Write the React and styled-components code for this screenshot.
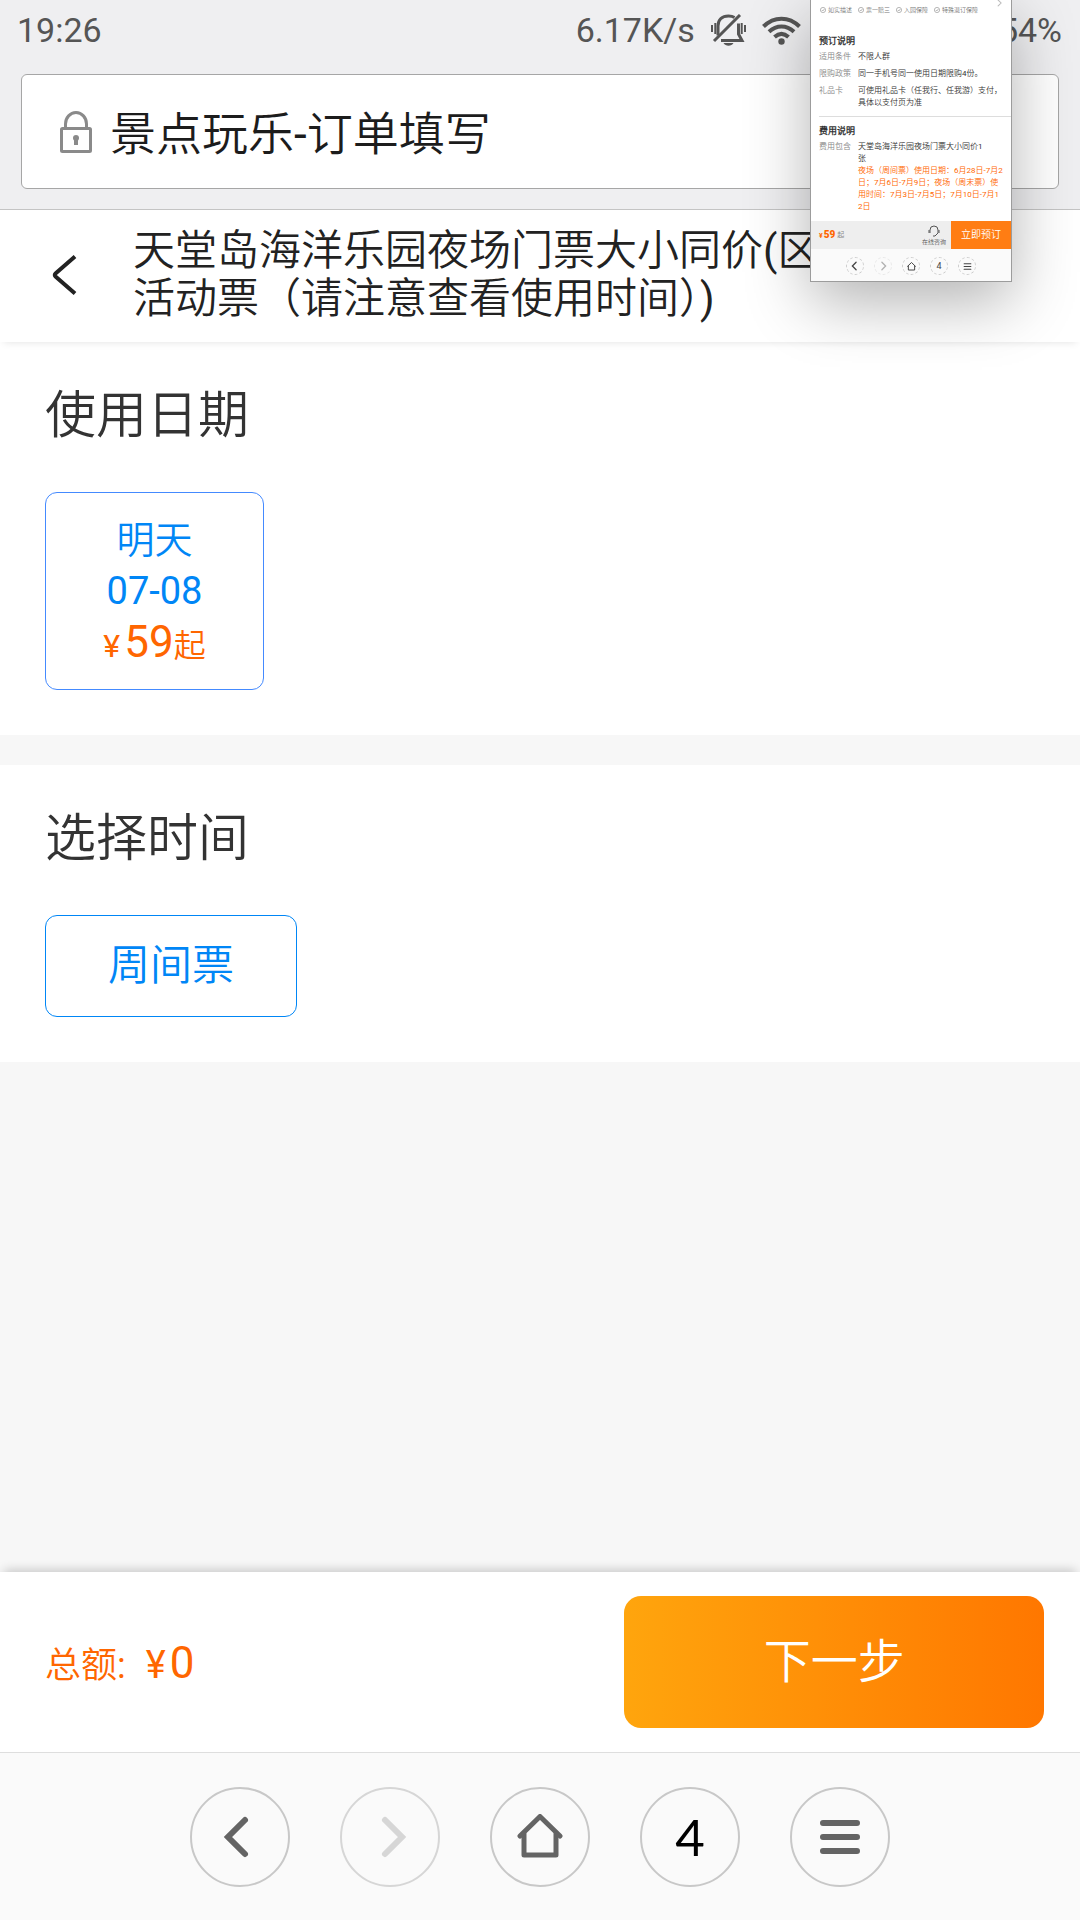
import React from 'react';
import styled, { createGlobalStyle } from 'styled-components';

const GlobalStyle = createGlobalStyle`
  * {
    box-sizing: border-box;
  }

  body {
    margin: 0;
    background: #f7f7f7;
    font-family: Roboto, 'Noto Sans CJK SC DemiLight', 'Noto Sans CJK SC Light', 'Noto Sans CJK SC', sans-serif;
    font-weight: 400;
    color: #333;
  }

  h1, h2, h3, p, dl, dd {
    margin: 0;
    font-weight: 400;
  }

  button {
    padding: 0;
    border: 0;
    background: none;
    color: inherit;
    font: inherit;
    cursor: pointer;
  }

  svg {
    display: block;
    flex: none;
  }
`;

const Page = styled.div`
  position: relative;
  display: flex;
  flex-direction: column;
  min-height: 100vh;
  overflow: hidden;
`;

/* browser chrome */

const BrowserTop = styled.header`
  display: flex;
  flex-direction: column;
  gap: 14px;
  padding-bottom: 20px;
  background: #efeff1;
  border-bottom: 1px solid #c4c4c4;
`;

const StatusBar = styled.div`
  display: flex;
  align-items: center;
  height: 60px;
  padding: 0 18px 0 17px;
  color: #555;
  font-size: 34px;
  line-height: 40px;
`;

const StatusRight = styled.div`
  display: flex;
  align-items: center;
  gap: 16px;
  margin-left: auto;
`;

const Battery = styled.span`
  margin-left: 182px;
`;

const AddressBar = styled.div`
  display: flex;
  align-items: center;
  gap: 18px;
  height: 115px;
  margin: 0 21px;
  padding: 0 38px;
  border: 1px solid #a6a6a6;
  border-radius: 6px;
  background: #fff;
`;

const AddressInput = styled.input`
  flex: 1;
  min-width: 0;
  padding: 0 0 4px;
  border: 0;
  outline: 0;
  background: none;
  color: #1c1c1c;
  font: inherit;
  font-size: 46px;
`;

/* order page */

const TitleBar = styled.div`
  display: flex;
  align-items: center;
  gap: 56px;
  padding: 17px 50px 19px;
  background: #fff;
  color: #222;
  box-shadow: 0 4px 8px -4px rgba(0, 0, 0, 0.12);
  z-index: 1;
`;

const Title = styled.h1`
  font-size: 42px;
  line-height: 48px;
`;

const Section = styled.section`
  margin-bottom: 30px;
  padding: 44px 45px 45px;
  background: #fff;
`;

const SectionTitle = styled.h2`
  margin-bottom: 46px;
  font-size: 51px;
  line-height: 60px;
`;

const DateCard = styled.button`
  display: flex;
  flex-direction: column;
  align-items: center;
  width: 219px;
  height: 198px;
  padding-top: 22px;
  border: 1px solid #448aff;
  border-radius: 12px;
  color: #0086f6;
  font-size: 38px;
  line-height: 51px;
`;

const Price = styled.span`
  color: #f60;
  font-size: 32px;
  line-height: 51px;

  b {
    margin-left: 4px;
    font-size: 44px;
    font-weight: 400;
  }
`;

const TimeCard = styled.button`
  height: 102px;
  padding: 0 62px 10px;
  border: 1px solid #0086f6;
  border-radius: 12px;
  color: #0086f6;
  font-size: 42px;
`;

const CheckoutBar = styled.div`
  display: flex;
  align-items: center;
  justify-content: space-between;
  margin-top: auto;
  padding: 24px 36px 24px 45px;
  background: #fff;
  box-shadow: 0 -6px 10px -4px rgba(0, 0, 0, 0.2);
`;

const Total = styled.p`
  display: flex;
  align-items: baseline;
  color: #f60;
  font-size: 36px;

  b {
    margin-left: 4px;
    font-size: 44px;
    font-weight: 400;
  }
`;

const Currency = styled.span`
  margin-left: 20px;
  font-size: 38px;
`;

const NextButton = styled.button`
  width: 42%;
  height: 132px;
  padding-bottom: 10px;
  border-radius: 17px;
  background: linear-gradient(90deg, #ffa50d, #ff7700);
  color: #fff;
  font-size: 47px;
`;

const BottomNav = styled.nav`
  display: flex;
  justify-content: center;
  gap: 50px;
  padding: 34px 0 33px;
  background: #fafafa;
  border-top: 1px solid #dedede;
`;

const NavButton = styled.button`
  display: flex;
  align-items: center;
  justify-content: center;
  width: 100px;
  height: 100px;
  border: 2px solid ${(props) => (props.disabled ? '#d6d6d6' : '#c8c8c8')};
  border-radius: 50%;
  color: ${(props) => (props.disabled ? '#d6d6d6' : '#646464')};
`;

const TabCount = styled.span`
  color: #000;
  font-family: Lato, sans-serif;
  font-size: 51px;
  line-height: 60px;
`;

/* screenshot preview that hangs over the top right corner */

const Preview = styled.aside`
  position: absolute;
  top: 0;
  right: 68px;
  z-index: 2;
  width: 202px;
  border: 1px solid #9c9c9c;
  border-top: 0;
  background: #fff;
  color: #333;
  font-size: 8px;
  line-height: 12px;
  box-shadow: 0 20px 60px rgba(0, 0, 0, 0.3);
`;

const Guarantees = styled.div`
  display: flex;
  gap: 6px;
  height: 27px;
  padding: 4px 0 0 9px;
  color: #777;
  font-size: 6px;
`;

const Guarantee = styled.span`
  display: flex;
  align-items: center;
  gap: 2px;
  height: 12px;
  white-space: nowrap;
`;

const More = styled.span`
  display: flex;
  align-items: flex-end;
  height: 3px;
  margin-left: auto;
  padding-right: 8px;
  color: #bbb;
`;

const PreviewSection = styled.section`
  margin-left: 8px;
  padding-top: 8px;
  border-bottom: ${(props) => (props.$last ? 0 : '1px solid #ddd')};
`;

const PreviewTitle = styled.h3`
  margin-bottom: 4px;
  font-size: 9px;
  font-weight: 700;
  line-height: 12px;
`;

const PreviewRow = styled.dl`
  display: grid;
  grid-template-columns: 39px 1fr;
  padding-bottom: ${(props) => props.$space}px;

  dt {
    color: #888;
  }

  dd {
    white-space: nowrap;
  }
`;

const Notice = styled.p`
  color: #f60;
`;

const PreviewBar = styled.div`
  display: flex;
  align-items: center;
  height: 28px;
  padding-left: 8px;
  background: #eee;
  color: #888;
  font-size: 7px;

  strong {
    color: #f60;
  }

  b {
    margin: 0 2px 0 1px;
    font-size: 10px;
  }
`;

const Service = styled.span`
  display: flex;
  flex-direction: column;
  align-items: center;
  gap: 1px;
  margin: 0 5px 0 auto;
  color: #555;
  font-size: 6px;
  line-height: 8px;
`;

const BookButton = styled.button`
  width: 60px;
  height: 28px;
  background: #ff7d13;
  color: #fff;
  font-size: 10px;
`;

const PreviewNav = styled.div`
  display: flex;
  justify-content: center;
  gap: 10px;
  padding: 8px 0 6px;
  background: #fafafa;
`;

const PreviewNavItem = styled.span`
  display: flex;
  align-items: center;
  justify-content: center;
  width: 18px;
  height: 18px;
  border: 1px dashed #ccc;
  border-radius: 50%;
  color: #444;
  font-size: 9px;
  opacity: ${(props) => (props.$faded ? 0.4 : 1)};
`;

const LockIcon = () => (
  <svg width="32" height="42" viewBox="0 0 32 42" fill="none" stroke="#8a8a8a" strokeWidth="3">
    <rect x="1.5" y="17.5" width="29" height="23" rx="1" />
    <path d="M5.500 17V13a10.500 11.500 0 0 1 21 0v4" />
    <circle cx="16" cy="27" r="3" fill="#8a8a8a" stroke="none" />
    <path d="M16 27v7" strokeWidth="4" />
  </svg>
);

const MuteIcon = () => (
  <svg width="35" height="32" viewBox="0 0 35 32" fill="none" stroke="#555" strokeWidth="3">
    <path d="M7 21.500V12C7 5.500 11 2 17.500 2c2.500 0 4.500.5 6 1.500" />
    <path d="M27.500 9.500V20l3.500 6.500H10" />
    <path d="M3 27L29 1" strokeWidth="3" />
    <path d="M12.500 29h10c-2 3.500-8 3.500-10 0z" fill="#555" stroke="none" />
    <path d="M1 11v7M4.300 9v11M30.700 9v11M34 11v7" strokeWidth="2" />
  </svg>
);

const WifiIcon = () => (
  <svg width="39" height="29" viewBox="0 0 39 29" fill="none" stroke="#555" strokeWidth="4">
    <path d="M1.500 10.500c10.500-10.500 25.500-10.500 36 0" />
    <path d="M7 15.800c7.500-7 17.500-7 25 0" />
    <path d="M12.500 21c4.500-4 9.500-4 14 0" />
    <circle cx="19.500" cy="25.500" r="3.200" fill="#555" stroke="none" />
  </svg>
);

const BackIcon = () => (
  <svg width="27" height="40" viewBox="0 0 27 40" fill="none" stroke="#222" strokeWidth="4">
    <path d="M25 1.500L5.500 18.500q-1.500 1.500 0 3L25 38.500" />
  </svg>
);

const Chevron = ({ size = 46, right }) => (
  <svg
    width={size}
    height={size}
    viewBox="0 0 46 46"
    fill="none"
    stroke="currentColor"
    strokeWidth="6"
    strokeLinecap="round"
  >
    <path d={right ? 'M18 6l17 17-17 17' : 'M28 6L11 23l17 17'} />
  </svg>
);

const HomeIcon = ({ size = 46 }) => (
  <svg
    width={size}
    height={size}
    viewBox="0 0 46 46"
    fill="none"
    stroke="currentColor"
    strokeWidth="5"
    strokeLinecap="round"
    strokeLinejoin="round"
  >
    <path d="M3 22L23 2.500 43 22" />
    <path d="M7 20v21h32V20" />
  </svg>
);

const MenuIcon = ({ size = 46 }) => (
  <svg
    width={size}
    height={size}
    viewBox="0 0 46 46"
    fill="none"
    stroke="currentColor"
    strokeWidth="6"
    strokeLinecap="round"
  >
    <path d="M6 9h34M6 23h34M6 37h34" />
  </svg>
);

const CheckIcon = () => (
  <svg width="6" height="6" viewBox="0 0 6 6" fill="none" stroke="#999" strokeWidth="0.700">
    <circle cx="3" cy="3" r="2.600" />
    <path d="M1.800 3l1 1 1.600-2" />
  </svg>
);

const HeadsetIcon = () => (
  <svg width="12" height="12" viewBox="0 0 12 12" fill="none" stroke="#555">
    <path d="M2 8V5a4 4 0 0 1 8 0v3l-3 3H5" />
    <path d="M1 5v3M11 5v3" />
  </svg>
);

const guarantees = ['如实描述', '票一赔三', '入园保障', '特殊退订保障'];

const PagePreview = () => (
  <Preview>
    <Guarantees>
      {guarantees.map((name) => (
        <Guarantee key={name}>
          <CheckIcon />
          {name}
        </Guarantee>
      ))}
      <More>
        <Chevron size={8} right />
      </More>
    </Guarantees>
    <PreviewSection>
      <PreviewTitle>预订说明</PreviewTitle>
      <PreviewRow $space={5}>
        <dt>适用条件</dt>
        <dd>不限人群</dd>
      </PreviewRow>
      <PreviewRow $space={5}>
        <dt>限购政策</dt>
        <dd>同一手机号同一使用日期限购4份。</dd>
      </PreviewRow>
      <PreviewRow $space={7}>
        <dt>礼品卡</dt>
        <dd>
          可使用礼品卡（任我行、任我游）支付，
          <br />
          具体以支付页为准
        </dd>
      </PreviewRow>
    </PreviewSection>
    <PreviewSection $last>
      <PreviewTitle>费用说明</PreviewTitle>
      <PreviewRow $space={8}>
        <dt>费用包含</dt>
        <dd>
          天堂岛海洋乐园夜场门票大小同价1
          <br />
          张
          <Notice>
            夜场（周间票）使用日期：6月28日-7月2
            <br />
            日；7月6日-7月9日；夜场（周末票）使
            <br />
            用时间：7月3日-7月5日；7月10日-7月1
            <br />
            2日
          </Notice>
        </dd>
      </PreviewRow>
    </PreviewSection>
    <PreviewBar>
      <strong>
        ¥<b>59</b>
      </strong>
      起
      <Service>
        <HeadsetIcon />
        在线咨询
      </Service>
      <BookButton>立即预订</BookButton>
    </PreviewBar>
    <PreviewNav>
      <PreviewNavItem>
        <Chevron size={10} />
      </PreviewNavItem>
      <PreviewNavItem $faded>
        <Chevron size={10} right />
      </PreviewNavItem>
      <PreviewNavItem>
        <HomeIcon size={9} />
      </PreviewNavItem>
      <PreviewNavItem>4</PreviewNavItem>
      <PreviewNavItem>
        <MenuIcon size={9} />
      </PreviewNavItem>
    </PreviewNav>
  </Preview>
);

const App = () => (
  <Page>
    <GlobalStyle />
    <BrowserTop>
      <StatusBar>
        <span>19:26</span>
        <StatusRight>
          <span>6.17K/s</span>
          <MuteIcon />
          <WifiIcon />
          <Battery>54%</Battery>
        </StatusRight>
      </StatusBar>
      <AddressBar>
        <LockIcon />
        <AddressInput aria-label="地址栏" defaultValue="景点玩乐-订单填写" />
      </AddressBar>
    </BrowserTop>

    <TitleBar>
      <button aria-label="返回">
        <BackIcon />
      </button>
      <Title>
        天堂岛海洋乐园夜场门票大小同价(区
        <br />
        活动票（请注意查看使用时间）)
      </Title>
    </TitleBar>

    <Section>
      <SectionTitle>使用日期</SectionTitle>
      <DateCard>
        <span>明天</span>
        <span>07-08</span>
        <Price>
          ¥<b>59</b>起
        </Price>
      </DateCard>
    </Section>

    <Section>
      <SectionTitle>选择时间</SectionTitle>
      <TimeCard>周间票</TimeCard>
    </Section>

    <CheckoutBar>
      <Total>
        总额:
        <Currency>¥</Currency>
        <b>0</b>
      </Total>
      <NextButton>下一步</NextButton>
    </CheckoutBar>

    <BottomNav>
      <NavButton aria-label="后退">
        <Chevron />
      </NavButton>
      <NavButton aria-label="前进" disabled>
        <Chevron right />
      </NavButton>
      <NavButton aria-label="主页">
        <HomeIcon />
      </NavButton>
      <NavButton aria-label="标签页">
        <TabCount>4</TabCount>
      </NavButton>
      <NavButton aria-label="菜单">
        <MenuIcon />
      </NavButton>
    </BottomNav>

    <PagePreview />
  </Page>
);

export default App;
